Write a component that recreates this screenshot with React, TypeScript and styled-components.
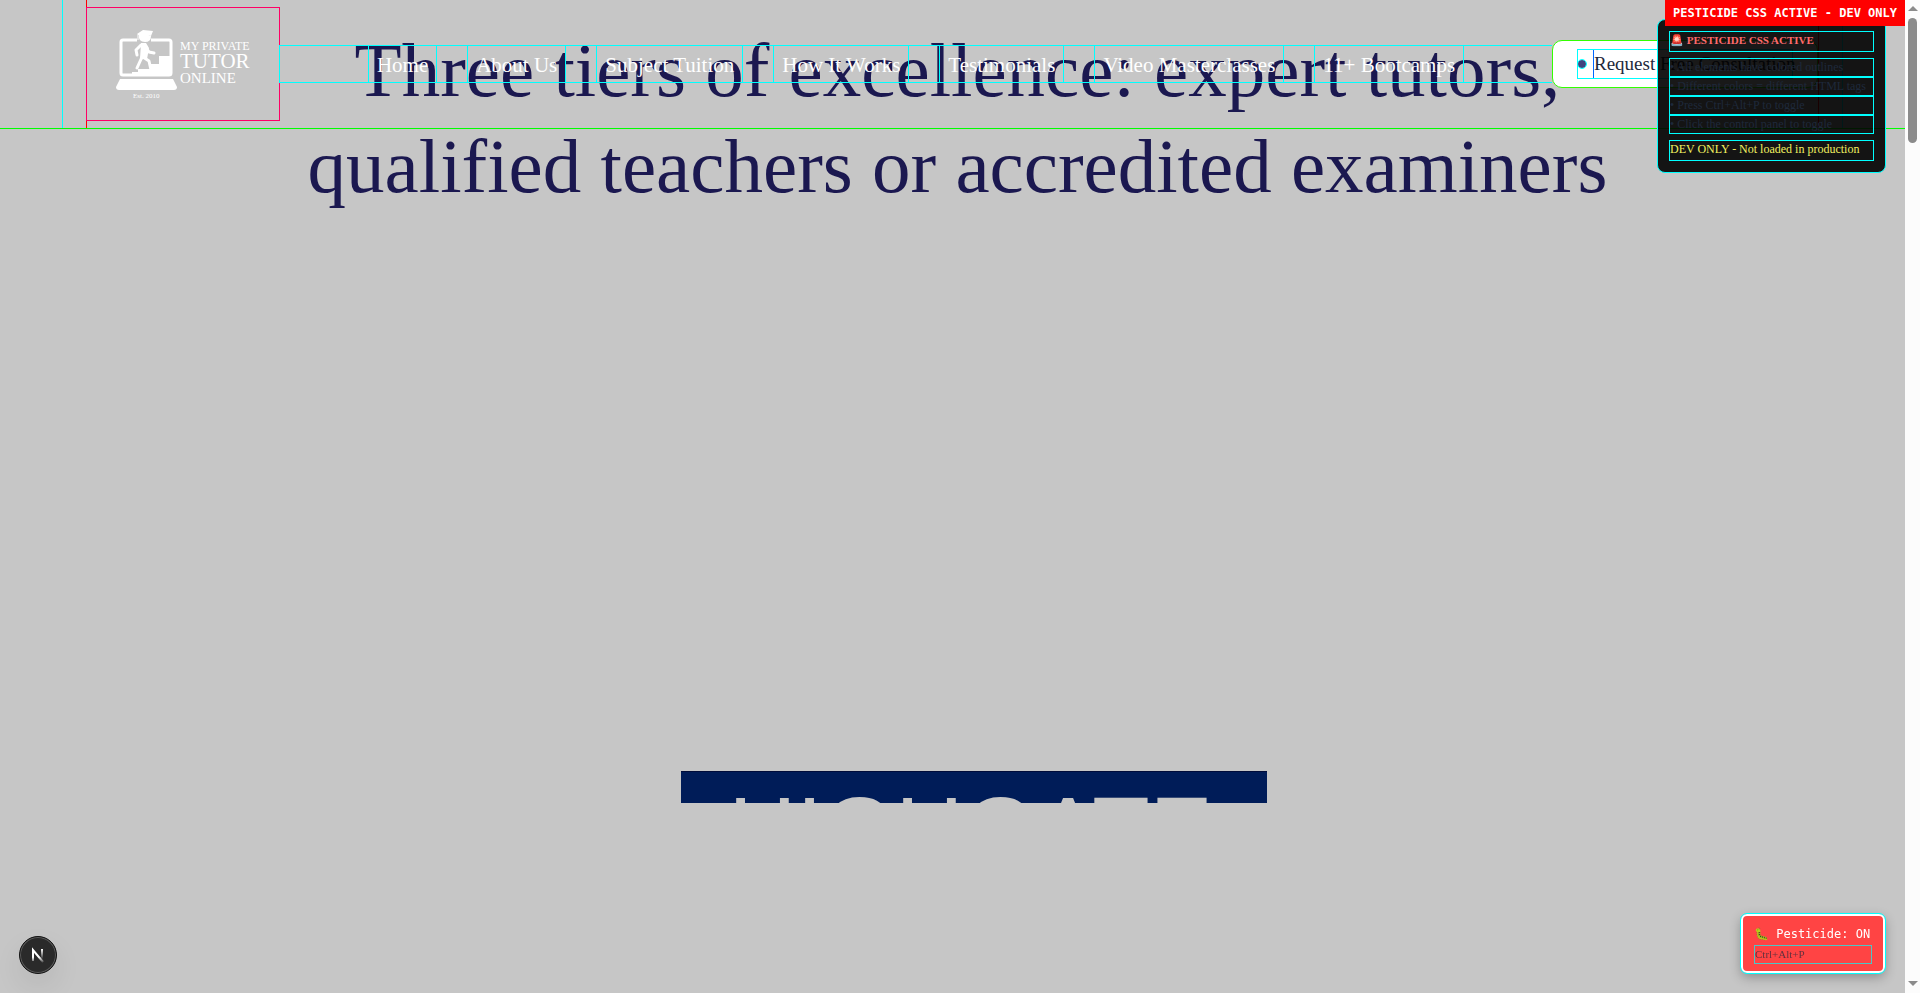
import React from "react";
import styled, { createGlobalStyle } from "styled-components";

const serif = `"Liberation Serif", "Times New Roman", serif`;
const mono = `"DejaVu Sans Mono", "Liberation Mono", monospace`;
const cyan = "#00ffff";

const GlobalStyle = createGlobalStyle`
  *, *::before, *::after { box-sizing: border-box; }
  body { margin: 0; background: #c6c6c6; font-family: ${serif}; }
  p, h1, ul { margin: 0; padding: 0; }
`;

const Shell = styled.div`
  display: flex;
  min-height: 100vh;
`;

const Page = styled.div`
  position: relative;
  flex: 1;
  min-width: 0;
  background: #c6c6c6;
`;

const Hero = styled.main`
  display: flex;
  flex-direction: column;
  align-items: center;
  padding-top: 22px;
`;

const Headline = styled.h1`
  padding-left: 10px;
  color: #1b1850;
  font-size: 77px;
  line-height: 96px;
  font-weight: 400;
  text-align: center;

  span { display: block; }
`;

const SchoolBanner = styled.div`
  width: 586px;
  height: 32px;
  margin: 557px 0 0 42px;
  padding: 12px 0 0 48px;
  overflow: hidden;
  background: #001c58;
  border-top: 1px solid #000c3a;
  color: #c6c6c6;
  font-family: "Liberation Sans", Arial, sans-serif;
  font-size: 94px;
  line-height: 94px;
  white-space: nowrap;
`;

const Header = styled.header`
  position: absolute;
  inset: 0 0 auto 0;
  height: 129px;
  border-bottom: 1px solid #00ff00;
`;

const HeaderFrame = styled.div`
  height: 100%;
  margin: 0 62px;
  padding: 0 23px;
  border: solid ${cyan};
  border-width: 0 1px;
`;

const HeaderRow = styled.div`
  display: flex;
  align-items: center;
  height: 100%;
  border: solid #ff0000;
  border-width: 0 1px;
`;

const LogoLink = styled.a`
  display: block;
  width: 194px;
  height: 114px;
  margin-left: -1px;
  border: 1px solid #ff0066;

  svg { display: block; width: 100%; height: 100%; }
`;

const Nav = styled.nav`
  flex: 1;
  display: flex;
  justify-content: center;
  height: 38px;
  margin-left: -1px;
  border: 1px solid ${cyan};
  border-right: 0;
`;

const NavList = styled.ul`
  display: flex;
  gap: 30px;
  list-style: none;
`;

const NavItem = styled.li`
  padding: 0 8px;
  border: solid ${cyan};
  border-width: 0 1px;
`;

const NavLink = styled.a`
  color: #fff;
  font-size: 21px;
  line-height: 38px;
  white-space: nowrap;
  text-decoration: none;
`;

const Consult = styled.button`
  flex: none;
  height: 48px;
  width: 266px;
  padding: 0 24px;
  border: 1px solid #33ff00;
  border-radius: 10px;
  background: #fff;
  color: #1e293b;
  font-family: ${serif};
  font-size: 19px;
`;

const ConsultInner = styled.span`
  display: flex;
  align-items: center;
  height: 30px;
  border: 1px solid ${cyan};
  white-space: nowrap;
`;

const Dot = styled.span`
  flex: none;
  width: 8px;
  height: 8px;
  margin-right: 7px;
  border-radius: 50%;
  background: #3f4480;
  outline: 1px solid ${cyan};
`;

const ConsultLabel = styled.span`
  line-height: 28px;
  border-left: 1px solid #0066ff;
`;

const Notice = styled.aside`
  position: absolute;
  top: 19px;
  right: 19px;
  width: 229px;
  padding: 11px;
  border: 1px solid ${cyan};
  border-radius: 8px;
  background: rgba(0, 0, 0, 0.9);
  font-size: 12px;
`;

const NoticeLine = styled.p<{ $color: string; $strong?: boolean }>`
  height: 21px;
  border: 1px solid ${cyan};
  color: ${(p) => p.$color};
  font-size: ${(p) => (p.$strong ? 11 : 12)}px;
  font-weight: ${(p) => (p.$strong ? 700 : 400)};
  line-height: 17px;
`;

const NoticeList = styled.ul`
  margin: 6px 0;
  list-style: none;
`;

const NoticeItem = styled.li`
  height: 19px;
  border: 1px solid ${cyan};
  color: #1e293b;
  line-height: 16px;
  white-space: nowrap;
`;

const Ribbon = styled.div`
  position: absolute;
  top: 0;
  right: 0;
  padding: 0 8px;
  background: #ff0000;
  color: #fff;
  font: 700 12px/26px ${mono};
`;

const Toggle = styled.button`
  position: fixed;
  right: 35px;
  bottom: 20px;
  width: 144px;
  height: 59px;
  padding: 9px 11px 0;
  border: 2px solid #fff;
  border-radius: 6px;
  outline: 1px solid ${cyan};
  background: #ff4444;
  box-shadow: 0 4px 12px rgba(0, 0, 0, 0.3);
  color: #fff;
  font: 12px/18px ${mono};
  text-align: left;
  white-space: pre;
  display: flex;
  flex-direction: column;
  gap: 2px;
`;

const Shortcut = styled.span`
  width: 118px;
  height: 19px;
  border: 1px solid ${cyan};
  opacity: 0.7;
  color: #1e293b;
  font: 11px/17px ${serif};
`;

const NextBadge = styled.button`
  position: fixed;
  left: 19px;
  bottom: 19px;
  width: 38px;
  height: 38px;
  padding: 0;
  border: 1px solid #111;
  border-radius: 50%;
  background: #2a2a2a;
  box-shadow: inset 0 0 0 1px #5c5c5c, 0 12px 28px rgba(0, 0, 0, 0.08);

  svg { display: block; margin: auto; }
`;

const Rail = styled.div`
  position: sticky;
  top: 0;
  display: flex;
  flex-direction: column;
  align-items: center;
  width: 15px;
  height: 100vh;
  padding: 6px 0 7px;
  background: #fcfcfc;
`;

const Arrow = styled.span<{ $down?: boolean }>`
  border: solid transparent;
  border-width: ${(p) => (p.$down ? "5px 5px 0" : "0 5px 5px")};
  border-top-color: ${(p) => (p.$down ? "#8b8b8b" : "transparent")};
  border-bottom-color: ${(p) => (p.$down ? "transparent" : "#8b8b8b")};
  margin-top: ${(p) => (p.$down ? "auto" : "0")};
`;

const Thumb = styled.span`
  width: 9px;
  height: 125px;
  margin-top: 7px;
  border-radius: 5px;
  background: #8b8b8b;
`;

const links = [
  "Home",
  "About Us",
  "Subject Tuition",
  "How It Works",
  "Testimonials",
  "Video Masterclasses",
  "11+ Bootcamps",
];

const notes = [
  "All elements have colored outlines",
  "Different colors = different HTML tags",
  "Press Ctrl+Alt+P to toggle",
  "Click the control panel to toggle",
];

function Logo() {
  return (
    <svg viewBox="87 8 192 112" fill="#fff" fontFamily={serif} role="img" aria-label="My Private Tutor Online">
      <path
        d="M137 40H123q-2 0-2 2V73q0 2 2 2H169q2 0 2-2V42q0-2-2-2H151"
        fill="none"
        stroke="#fff"
        strokeWidth="3"
      />
      <path d="M132 75V72H138V69H150V64H159V56H171V75Z" />
      <path d="M120 79H173L177 87Q177 90 174 90H119Q116 90 116 87Z" />
      <path d="M137 34 143 30 153 31 151 36 148 35 138 35Z" />
      <path d="M139 35Q138 42 145 42Q151 42 151 36L146 34Z" />
      <path d="M138 35V40" stroke="#fff" strokeWidth="1" />
      <path
        d="M144 46 142 58M142 57 137 68M143 57 149 61 151 70M141 45 136 50 137 55M146 48 149 52 154 53"
        fill="none"
        stroke="#fff"
        strokeWidth="3"
        strokeLinecap="round"
        strokeLinejoin="round"
      />
      <path d="M141 43H146L149 48 147 59H140Z" />
      <text x="180" y="50" fontSize="12">MY PRIVATE</text>
      <text x="180" y="68" fontSize="21">TUTOR</text>
      <text x="180" y="83" fontSize="15">ONLINE</text>
      <text x="133" y="98" fontSize="7">Est. 2010</text>
    </svg>
  );
}

export default function App() {
  return (
    <Shell>
      <GlobalStyle />
      <Page>
        <Hero>
          <Headline>
            <span>Three tiers of excellence: expert tutors,</span>
            <span>qualified teachers or accredited examiners</span>
          </Headline>
          <SchoolBanner>HIGHGATE</SchoolBanner>
        </Hero>
        <Header>
          <HeaderFrame>
            <HeaderRow>
              <LogoLink href="#home">
                <Logo />
              </LogoLink>
              <Nav>
                <NavList>
                  {links.map((label) => (
                    <NavItem key={label}>
                      <NavLink href="#menu">{label}</NavLink>
                    </NavItem>
                  ))}
                </NavList>
              </Nav>
              <Consult type="button">
                <ConsultInner>
                  <Dot />
                  <ConsultLabel>Request Free Consultation</ConsultLabel>
                </ConsultInner>
              </Consult>
            </HeaderRow>
          </HeaderFrame>
        </Header>
        <Notice>
          <NoticeLine $color="#ff6b6b" $strong>🚨 PESTICIDE CSS ACTIVE</NoticeLine>
          <NoticeList>
            {notes.map((note) => (
              <NoticeItem key={note}>• {note}</NoticeItem>
            ))}
          </NoticeList>
          <NoticeLine $color="#f0f060">DEV ONLY - Not loaded in production</NoticeLine>
        </Notice>
        <Ribbon>PESTICIDE CSS ACTIVE - DEV ONLY</Ribbon>
        <Toggle type="button">
          <span>🐛 Pesticide: ON</span>
          <Shortcut>Ctrl+Alt+P</Shortcut>
        </Toggle>
        <NextBadge type="button" aria-label="Open developer tools">
          <svg width="14" height="16" viewBox="0 0 14 16" fill="none">
            <defs>
              <linearGradient id="fade" x1="0" y1="0" x2="0" y2="1">
                <stop offset="0.6" stopColor="#fff" />
                <stop offset="1" stopColor="#fff" stopOpacity="0.2" />
              </linearGradient>
              <linearGradient id="stem" gradientUnits="userSpaceOnUse" x1="0" y1="2" x2="0" y2="12">
                <stop stopColor="#fff" />
                <stop offset="1" stopColor="#fff" stopOpacity="0" />
              </linearGradient>
            </defs>
            <path d="M2 14V3L12 15" stroke="url(#fade)" strokeWidth="2" />
            <path d="M11 2V12" stroke="url(#stem)" strokeWidth="2" />
          </svg>
        </NextBadge>
      </Page>
      <Rail aria-hidden="true">
        <Arrow />
        <Thumb />
        <Arrow $down />
      </Rail>
    </Shell>
  );
}
